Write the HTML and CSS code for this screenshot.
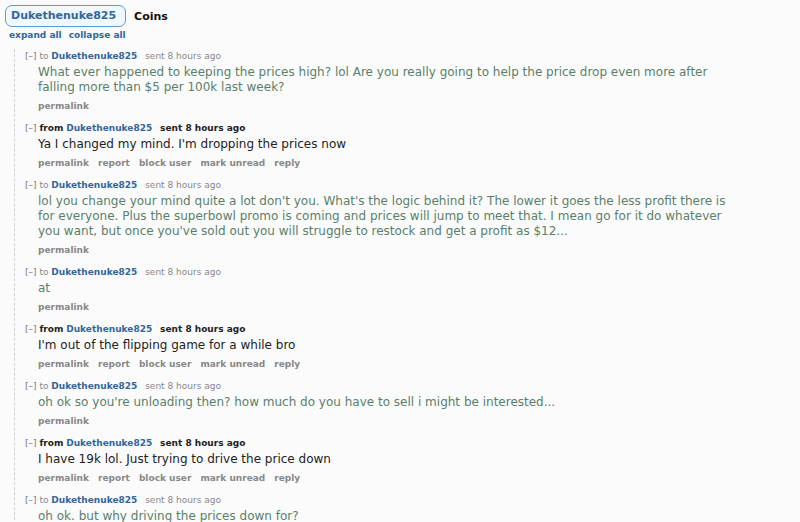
FILE: index.html
```html
<!DOCTYPE html>
<html lang="en">
<head>
  <meta charset="UTF-8" />
  <title>messages: Coins</title>
  <link rel="stylesheet" href="styles.css">
</head>
<body>

  <!-- thread header -->
  <div class="thread-head">
    <span class="pill">Dukethenuke825</span>
    <span class="subject">Coins</span>
  </div>
  <div class="toggles">
    <a href="#">expand all</a>
    <a href="#">collapse all</a>
  </div>

  <div class="thread">

    <div class="msg sent">
      <p class="tagline"><span class="expand">[&ndash;]</span> to <a class="author" href="#">Dukethenuke825</a> <span class="time">sent 8 hours ago</span></p>
      <div class="md">What ever happened to keeping the prices high? lol Are you really going to help the price drop even more after falling more than $5 per 100k last week?</div>
      <ul class="buttons"><li>permalink</li></ul>
    </div>

    <div class="msg">
      <p class="tagline"><span class="expand">[&ndash;]</span> <b>from</b> <a class="author" href="#">Dukethenuke825</a> <b class="time">sent 8 hours ago</b></p>
      <div class="md">Ya I changed my mind. I'm dropping the prices now</div>
      <ul class="buttons"><li>permalink</li><li>report</li><li>block user</li><li>mark unread</li><li>reply</li></ul>
    </div>

    <div class="msg sent">
      <p class="tagline"><span class="expand">[&ndash;]</span> to <a class="author" href="#">Dukethenuke825</a> <span class="time">sent 8 hours ago</span></p>
      <div class="md">lol you change your mind quite a lot don't you. What's the logic behind it? The lower it goes the less profit there is for everyone. Plus the superbowl promo is coming and prices will jump to meet that. I mean go for it do whatever you want, but once you've sold out you will struggle to restock and get a profit as $12...</div>
      <ul class="buttons"><li>permalink</li></ul>
    </div>

    <div class="msg sent">
      <p class="tagline"><span class="expand">[&ndash;]</span> to <a class="author" href="#">Dukethenuke825</a> <span class="time">sent 8 hours ago</span></p>
      <div class="md">at</div>
      <ul class="buttons"><li>permalink</li></ul>
    </div>

    <div class="msg">
      <p class="tagline"><span class="expand">[&ndash;]</span> <b>from</b> <a class="author" href="#">Dukethenuke825</a> <b class="time">sent 8 hours ago</b></p>
      <div class="md">I'm out of the flipping game for a while bro</div>
      <ul class="buttons"><li>permalink</li><li>report</li><li>block user</li><li>mark unread</li><li>reply</li></ul>
    </div>

    <div class="msg sent">
      <p class="tagline"><span class="expand">[&ndash;]</span> to <a class="author" href="#">Dukethenuke825</a> <span class="time">sent 8 hours ago</span></p>
      <div class="md">oh ok so you're unloading then? how much do you have to sell i might be interested...</div>
      <ul class="buttons"><li>permalink</li></ul>
    </div>

    <div class="msg">
      <p class="tagline"><span class="expand">[&ndash;]</span> <b>from</b> <a class="author" href="#">Dukethenuke825</a> <b class="time">sent 8 hours ago</b></p>
      <div class="md">I have 19k lol. Just trying to drive the price down</div>
      <ul class="buttons"><li>permalink</li><li>report</li><li>block user</li><li>mark unread</li><li>reply</li></ul>
    </div>

    <div class="msg sent">
      <p class="tagline"><span class="expand">[&ndash;]</span> to <a class="author" href="#">Dukethenuke825</a> <span class="time">sent 8 hours ago</span></p>
      <div class="md">oh ok. but why driving the prices down for?</div>
      <ul class="buttons"><li>permalink</li></ul>
    </div>

  </div>

</body>
</html>
```

FILE: styles.css
```css
body {
  margin: 0;
  background: #fbfbfb;
  color: #222;
  font-family: "DejaVu Sans", Verdana, sans-serif;
  overflow: hidden;
}

a {
  text-decoration: none;
}

.thread-head {
  display: flex;
  align-items: center;
  gap: 8px;
  padding: 5px 0 0 5px;
}

.pill {
  border: 1px solid #5f99cf;
  border-radius: 7px;
  background: #eff7ff;
  color: #336699;
  font-weight: bold;
  font-size: 11px;
  padding: 3px 9px 3px 5px;
  line-height: 14px;
}

.subject {
  font-weight: bold;
  font-size: 11px;
  color: #111;
}

.toggles {
  display: flex;
  gap: 7px;
  padding: 3px 0 0 9px;
  font-size: 9px;
  font-weight: bold;
}

.toggles a {
  color: #369;
}

.thread {
  margin: 9px 0 0 14px;
  padding-left: 10px;
  border-left: 1px dashed #d0d0d0;
}

.msg {
  padding-bottom: 8px;
}

.tagline {
  margin: 0;
  font-size: 9px;
  line-height: 14px;
  color: #888;
}

.tagline b {
  color: #222;
}

.expand {
  color: #777;
}

.author {
  color: #369;
  font-weight: bold;
}

.time {
  margin-left: 5px;
}

.md {
  margin: 2px 0 0 13px;
  font-size: 12px;
  line-height: 15px;
  max-width: 694px;
}

.sent .md {
  color: #5a7f6a;
}

.buttons {
  display: flex;
  gap: 9px;
  list-style: none;
  margin: 4px 0 0 13px;
  padding: 0;
  font-size: 9px;
  font-weight: bold;
  line-height: 14px;
  color: #888;
}
```
